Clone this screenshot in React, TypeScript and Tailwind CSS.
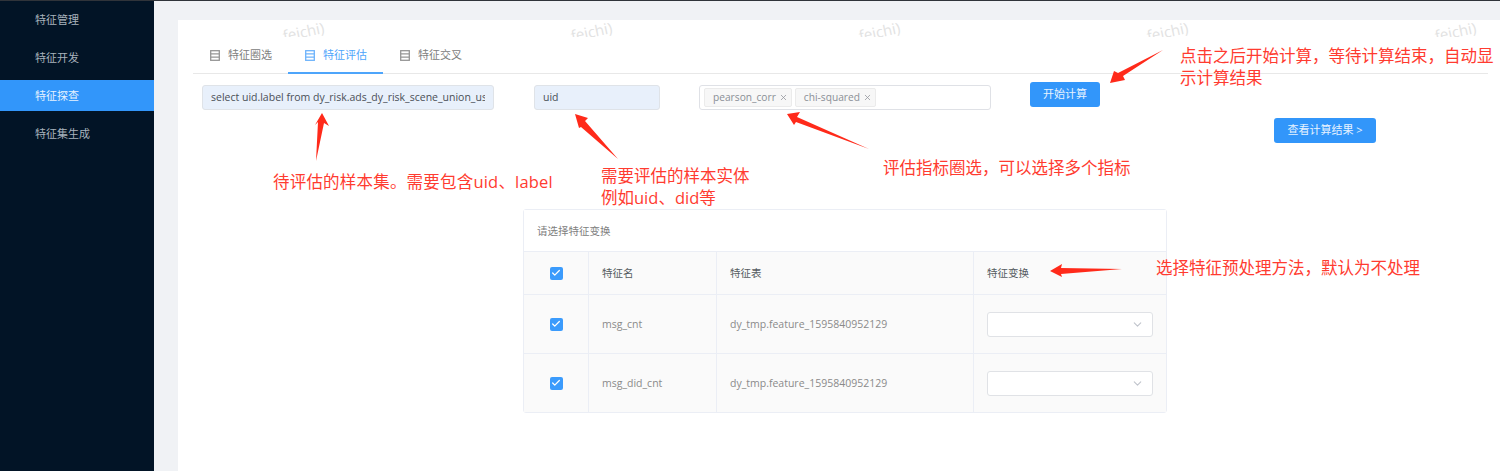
import { Check, ChevronDown, X } from "lucide-react";

const FONT = "font-['Open_Sans','Noto_Sans_CJK_SC',sans-serif]";

const navItems = ["特征管理", "特征开发", "特征探查", "特征集生成"];
const tabs = ["特征圈选", "特征评估", "特征交叉"];
const rows = [
  { name: "msg_cnt", table: "dy_tmp.feature_1595840952129" },
  { name: "msg_did_cnt", table: "dy_tmp.feature_1595840952129" },
];
const watermarks = [276, 564, 852, 1140, 1428];

const arrows = [
  "322,113 329,126 324,123 316,161 318,122 315,125",
  "575,114 588,118 585,121 618,159 581,127 579,128",
  "787,114 800,112 797,117 869,149 796,122 794,125",
  "1110,83 1114,71 1118,73 1163,50 1123,76 1125,80",
  "1050,271 1062,264 1061,268 1122,269 1061,274 1062,277",
];

function TabIcon({ active }: { active: boolean }) {
  const color = active ? "#6db3fb" : "#969696";
  return (
    <svg width="10" height="11" viewBox="0 0 10 11" fill="none" stroke={color} strokeWidth="1.3">
      <rect x="0.7" y="0.7" width="8.6" height="9.6" />
      <path d="M0.7 3.9h8.6M0.7 7.1h8.6" />
    </svg>
  );
}

function Box() {
  return (
    <span className="flex h-[13px] w-[13px] items-center justify-center rounded-[2px] bg-[#3b9bfc]">
      <Check size={10} strokeWidth={3} className="text-white" />
    </span>
  );
}

function SelectBox() {
  return (
    <div className="flex h-[25px] w-[166px] items-center justify-end rounded-[3px] border border-[#e0e2e6] bg-white pr-[8px]">
      <ChevronDown size={13} className="text-[#c0c4cc]" />
    </div>
  );
}

function Tag({ label }: { label: string }) {
  return (
    <span className="flex h-[19px] items-center gap-[3px] rounded-[2px] border border-[#ebebeb] bg-[#f7f7f7] pl-[8px] pr-[3px] text-[10.2px] text-[#8a8f96]">
      {label}
      <X size={9} className="text-[#909399]" />
    </span>
  );
}

export default function App() {
  return (
    <div className={`relative flex h-[471px] w-[1500px] overflow-hidden border-t border-[#30343a] bg-[#f0f2f5] ${FONT}`}>
      <aside className="flex w-[154px] shrink-0 flex-col gap-[7px] bg-[#021426] pt-[3px]">
        {navItems.map((item) => (
          <div
            key={item}
            className={`flex h-[31px] items-center pl-[35px] pt-[2px] text-[11px] ${
              item === "特征探查" ? "bg-[#3296fa] text-[#e6f2ff]" : "text-[#a9b3bd]"
            }`}
          >
            {item}
          </div>
        ))}
      </aside>

      <main className="ml-[24px] mt-[19px] flex-1 bg-white pl-[15px] pr-[12px]">
        <div className="flex h-[54px] items-end border-b border-[#e8e8e8]">
          {tabs.map((tab) => {
            const active = tab === "特征评估";
            return (
              <div
                key={tab}
                className={`-mb-px flex h-[38px] w-[95px] items-center justify-center gap-[8px] border-b-2 pl-px pt-[2px] text-[11px] ${
                  active ? "border-[#4ea5fb] text-[#4ea5fb]" : "border-transparent text-[#808080]"
                }`}
              >
                <TabIcon active={active} />
                {tab}
              </div>
            );
          })}
        </div>

        <div className="mt-[8px] flex items-start pl-[9px]">
          <div className="mt-[3px] flex h-[25px] w-[292px] items-center overflow-hidden rounded-[3px] border border-[#dfe3e8] bg-[#e8f0fb] px-[8px] text-[10.5px] whitespace-nowrap text-[#4a4f57]">
            <span className="overflow-hidden">select uid.label from dy_risk.ads_dy_risk_scene_union_user</span>
          </div>
          <div className="ml-[40px] mt-[3px] flex h-[25px] w-[126px] items-center rounded-[3px] border border-[#dfe3e8] bg-[#e8f0fb] px-[8px] text-[10.5px] text-[#4a4f57]">
            uid
          </div>
          <div className="ml-[39px] mt-[3px] flex h-[25px] w-[292px] items-center gap-[3px] rounded-[3px] border border-[#dfe1e6] bg-white pl-[4px]">
            <Tag label="pearson_corr" />
            <Tag label="chi-squared" />
          </div>
          <button className="ml-[39px] h-[25px] w-[70px] rounded-[3px] bg-[#3296fa] text-[11px] text-[#e6f2ff]">
            开始计算
          </button>
        </div>

        <div className="mr-[112px] mt-[8px] flex justify-end">
          <button className="h-[25px] w-[102px] rounded-[3px] bg-[#3296fa] text-[11px] text-[#e6f2ff]">
            查看计算结果 &gt;
          </button>
        </div>

        <div className="ml-[330px] mt-[66px] w-[644px] rounded-[3px] border border-[#ebeef5] text-[10.5px]">
          <div className="flex h-[41px] items-center bg-white pl-[13px] pt-[2px] text-[#808080]">请选择特征变换</div>
          <div className="grid grid-cols-[64px_128px_257px_1fr] bg-[#fafafa]">
            {["", "特征名", "特征表", "特征变换"].map((head, i) => (
              <div
                key={head}
                className={`flex h-[43px] items-center border-t border-[#ebeef5] text-[#555a60] ${
                  i === 0 ? "justify-center" : "border-l pl-[13px] pt-[2px]"
                }`}
              >
                {i === 0 ? <Box /> : head}
              </div>
            ))}
            {rows.map((row) => (
              <div key={row.name} className="contents text-[#8a8a8a]">
                <div className="flex h-[59px] items-center justify-center border-t border-[#ebeef5]">
                  <Box />
                </div>
                <div className="flex h-[59px] items-center border-l border-t border-[#ebeef5] pl-[13px] pt-[2px]">{row.name}</div>
                <div className="flex h-[59px] items-center border-l border-t border-[#ebeef5] pl-[13px] pt-[2px]">{row.table}</div>
                <div className="flex h-[59px] items-center border-l border-t border-[#ebeef5] pl-[13px]">
                  <SelectBox />
                </div>
              </div>
            ))}
          </div>
        </div>
      </main>

      {/* watermark, cut off just under the card's top edge */}
      <div className="pointer-events-none absolute left-0 top-[19px] h-[17px] w-[1500px] overflow-hidden">
        {watermarks.map((x) => (
          <span
            key={x}
            className="absolute top-[1px] -rotate-12 text-[15px] text-[#e2e2e2]"
            style={{ left: x }}
          >
            _feichi)
          </span>
        ))}
      </div>

      {/* red review notes pasted on top of the screenshot */}
      <svg className="pointer-events-none absolute -top-px left-0" width="1500" height="471">
        {arrows.map((points) => (
          <polygon key={points} points={points} fill="#ff2a1a" />
        ))}
      </svg>
      <div className="absolute left-[273px] top-[170px] text-[16.5px] leading-[22px] tracking-[0.2px] whitespace-nowrap text-[#ff3b30]">
        待评估的样本集。需要包含uid、label
      </div>
      <div className="absolute left-[601px] top-[164px] text-[16.5px] leading-[22px] whitespace-nowrap text-[#ff3b30]">
        需要评估的样本实体
        <br />
        例如uid、did等
      </div>
      <div className="absolute left-[883px] top-[156px] text-[16.5px] leading-[22px] whitespace-nowrap text-[#ff3b30]">
        评估指标圈选，可以选择多个指标
      </div>
      <div className="absolute left-[1180px] top-[44px] w-[320px] text-[16.5px] leading-[22px] text-[#ff3b30]">
        点击之后开始计算，等待计算结束，自动显示计算结果
      </div>
      <div className="absolute left-[1156px] top-[256px] text-[16.5px] leading-[22px] whitespace-nowrap text-[#ff3b30]">
        选择特征预处理方法，默认为不处理
      </div>
    </div>
  );
}
